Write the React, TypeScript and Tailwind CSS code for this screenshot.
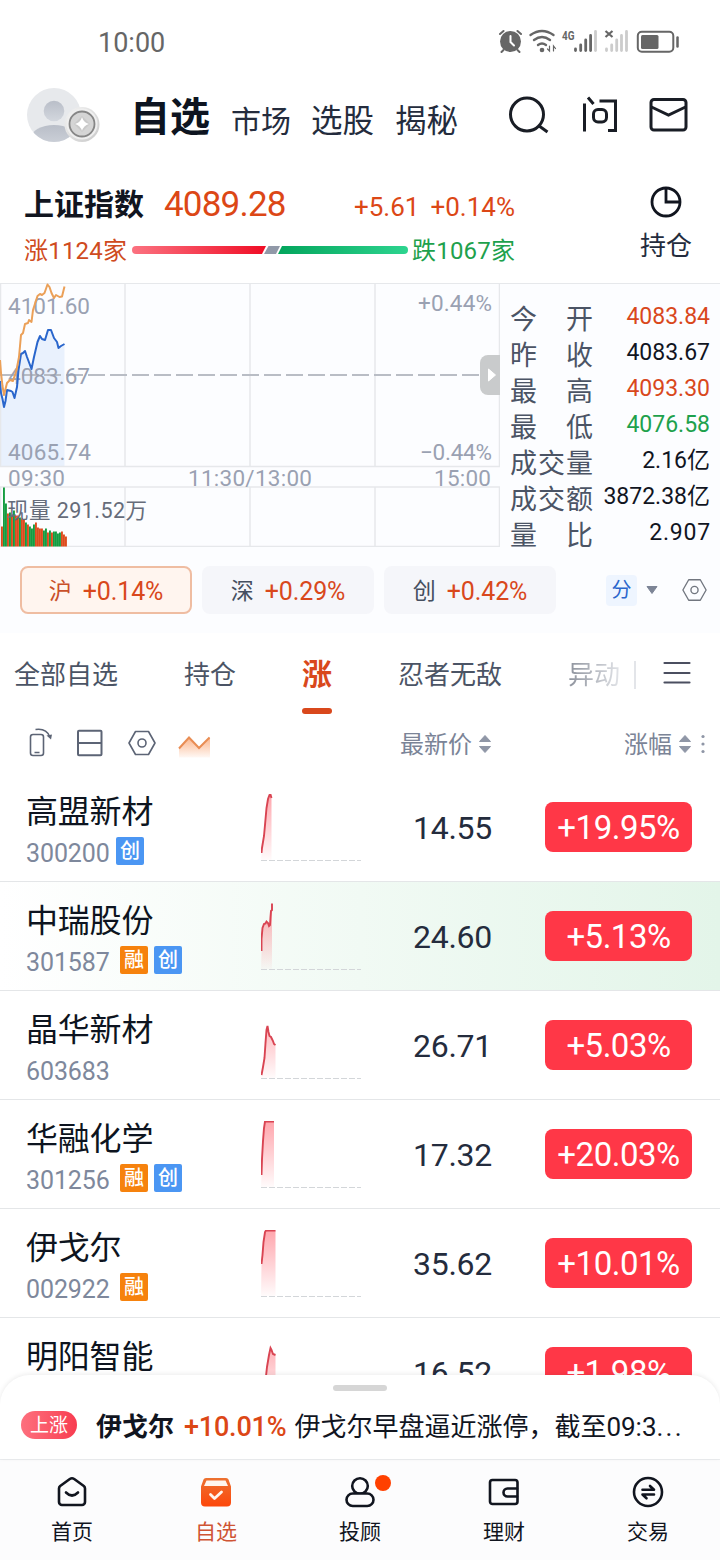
import type { ReactNode } from "react";
import clsx from "clsx";

type Tag = "融" | "创";

interface Stock {
    name: string;
    code: string;
    tags: Tag[];
    price: string;
    change: string;
    line: string;
    highlight?: boolean;
}

const STOCKS: Stock[] = [
    { name: "高盟新材", code: "300200", tags: ["创"], price: "14.55", change: "+19.95%", line: "0.5,59 1,54 3,42 4,31 5.5,14 7,5 8.5,1 9.5,0.5 10.5,4" },
    { name: "中瑞股份", code: "301587", tags: ["融", "创"], price: "24.60", change: "+5.13%", line: "0.5,48 0.5,36 1.5,25 3,21 4.5,20.5 5.5,18.5 7,20 8,23 9,22 9.5,14 10,8 11,7 11,0.5", highlight: true },
    { name: "晶华新材", code: "603683", tags: [], price: "26.71", change: "+5.03%", line: "0.5,63 2,55 3.5,46 4.5,31 5.5,18 6.5,14 7.5,20 8.5,24 10,25 12,29 13,32 14.5,33" },
    { name: "华融化学", code: "301256", tags: ["融", "创"], price: "17.32", change: "+20.03%", line: "0.5,54 1,38 2,20 3,7 4,0.5 13,0.5" },
    { name: "伊戈尔", code: "002922", tags: ["融"], price: "35.62", change: "+10.01%", line: "0.5,34 1.5,25 2.5,12 4,2 5,0.5 14.5,0.5" },
    { name: "明阳智能", code: "", tags: [], price: "16.52", change: "+1.98%", line: "0.5,70 3,56 6,28 8,16 9.5,9 10.5,11 12,15 14.5,16" },
];

const QUOTES = [
    { label: "今　开", value: "4083.84", color: "text-[#d9481c]" },
    { label: "昨　收", value: "4083.67", color: "text-[#11151f]" },
    { label: "最　高", value: "4093.30", color: "text-[#d9481c]" },
    { label: "最　低", value: "4076.58", color: "text-[#1ea14c]" },
    { label: "成交量", value: "2.16亿", color: "text-[#11151f]" },
    { label: "成交额", value: "3872.38亿", color: "text-[#11151f]" },
    { label: "量　比", value: "2.907", color: "text-[#11151f] tracking-[0.8px] -mr-px" },
];

const VOLUME = [20, 59, 43, 33, 34, 32, 36, 31, 31, 29, 28, 27, 24, 22, 20, 18, 22, 24, 19, 18, 18, 16, 18, 14, 16, 14, 15, 15, 13, 14, 15, 12, 10];
const GREEN_BARS = [1, 2, 4, 6, 9, 12, 14, 15, 16, 21, 22, 24, 26, 27, 28, 29];

const BLUE_LINE = "0,98 1,110 2.5,116 4,124 5.5,118 7,107 11,108 12.5,109 14.5,115 17,104 18.5,87 21,71 23,70 25,68 27,74 31.5,86 34,74 37.5,59 40,53 42,56 45,57 48,47 51,47 54,55 57,59 58.5,65 61,63 64.5,61";
const ORANGE_LINE = "0,77 1,90 2.5,103 4,112 7,100 10,97 13,98 16.5,87 19,74 21,52 23,50 25,41 28,40 29,37 31.5,39 33,27 37.5,13 40,11 42,12 44.5,10 47.5,1.5 49.5,4 51.5,10 54,15 56,12 59.5,14 62,13.5 64.5,3.5";

function StatusBar() {
    return (
        <div className="flex h-[84px] items-center justify-between pl-[98px] pr-10 text-[#666]">
            <span className="mt-[2px] text-[27px] leading-8">10:00</span>
            <svg className="h-7 w-[182px]" viewBox="498 28 182 28" fill="none" stroke="#666" strokeLinecap="round">
                {/* alarm */}
                <circle cx="510.500" cy="41.500" r="10.500" fill="#666" stroke="none" />
                <path d="M500 34l3.500-3M521 34l-3.500-3M503.500 50l-2 2M517.500 50l2 2" strokeWidth="2" />
                <path d="M510.500 36v6l3.500 3.500" stroke="#fff" strokeWidth="2" />
                {/* wifi */}
                <path d="M530.500 35q11.500-8 23 0M534 40q8-6 16 0M538 45q4-3 8 0" strokeWidth="2.300" />
                <circle cx="542" cy="50" r="2.300" fill="#666" stroke="none" />
                <path d="M549.500 46v5l-2-2M553.500 51v-5l2 2.500" strokeWidth="1.200" />
                {/* signal */}
                <text x="562" y="40" fontSize="13" fontWeight="700" fill="#666" stroke="none" textLength="12.500" lengthAdjust="spacingAndGlyphs">4G</text>
                <path d="M575.500 49v1.500M580.700 45v5.500M585.700 40v10.500M590.600 35.500v15" strokeWidth="2.800" />
                <path d="M595.500 31.500v19" stroke="#ccc" strokeWidth="2.800" />
                <path d="M605.500 31l7 6M612.500 31l-7 6" strokeWidth="2.200" strokeLinecap="butt" />
                <path d="M606.500 49v1.500M611.700 45v5.500M616.700 40v10.500M621.500 35.500v15M626.500 31.500v19" stroke="#ccc" strokeWidth="2.800" />
                {/* battery */}
                <rect x="637.800" y="31.800" width="35.500" height="20" rx="4" strokeWidth="2" />
                <rect x="641" y="35" width="17.500" height="14" rx="1.500" fill="#666" stroke="none" />
                <path d="M677.500 37.500v9" strokeWidth="2.500" />
            </svg>
        </div>
    );
}

function Header() {
    return (
        <header className="flex h-[66px] items-center pl-[26px] pr-[30px]">
            <svg className="h-[58px] w-[76px] shrink-0" viewBox="26 88 76 58">
                <defs>
                    <linearGradient id="avatarBody" x1="0" y1="0" x2="0" y2="1">
                        <stop offset="0" stopColor="#b9bec8" />
                        <stop offset="1" stopColor="#d3d7de" />
                    </linearGradient>
                    <linearGradient id="medal" x1="0" y1="0" x2="1" y2="1">
                        <stop offset="0" stopColor="#f4f4f4" />
                        <stop offset="1" stopColor="#c9c9c9" />
                    </linearGradient>
                    <clipPath id="avatarClip"><circle cx="54" cy="115" r="27" /></clipPath>
                </defs>
                <circle cx="54" cy="115" r="27" fill="#e7e9ec" />
                <g clipPath="url(#avatarClip)" fill="url(#avatarBody)">
                    <circle cx="54" cy="111" r="10.300" />
                    <ellipse cx="54" cy="138" rx="23" ry="13" />
                </g>
                <circle cx="82" cy="124.500" r="17.500" fill="url(#medal)" />
                <circle cx="82" cy="124" r="15.500" fill="#efefef" />
                <circle cx="82" cy="124" r="12.500" fill="#d5d5d5" stroke="#868686" strokeWidth="1.800" />
                <path d="M82 116l8 8-8 8-8-8z" fill="#c9c9c9" />
                <path d="M82 117q1.500 5.500 7 7q-5.500 1.500-7 7q-1.500-5.500-7-7q5.500-1.500 7-7z" fill="#fff" />
            </svg>
            <nav className="flex items-center pt-[2px] text-[31.500px] leading-10 text-[#242c3d]">
                <span className="ml-[28px] text-[40px] font-bold text-[#0d1420]">自选</span>
                <span className="ml-[21px] mt-2 text-[30px]">市场</span>
                <span className="ml-[20px] mt-2">选股</span>
                <span className="ml-[21px] mt-2">揭秘</span>
            </nav>
            <svg className="ml-auto h-11 w-[184px]" viewBox="506 95 184 44" fill="none" stroke="#191d25" strokeWidth="3">
                <circle cx="527" cy="114.500" r="16.500" />
                <path d="M538.500 125.500l9 6.500" />
                <path d="M584.500 103.500v28M588 97.500l5.500 6.500M599.500 101h16v29.500h-7.500" />
                <rect x="593.500" y="109.500" width="13" height="12.500" rx="4.500" />
                <rect x="651" y="99.500" width="35" height="30.500" rx="3" />
                <path d="M651.500 107l17 8 17-8" />
            </svg>
        </header>
    );
}

function IndexSummary() {
    return (
        <section className="flex h-[133px] pl-6 pt-[35px]">
            <div className="w-[500px]">
                <div className="flex h-10 items-center">
                    <span className="w-[140px] text-[30px] font-bold leading-10 text-[#11151f]">上证指数</span>
                    <span className="w-[190px] text-[35px] leading-10 tracking-[-0.8px] text-[#dc4716]">4089.28</span>
                    <span className="mt-[3px] flex gap-[11px] text-[26px] leading-8 text-[#dc4716]">
                        <span>+5.61</span>
                        <span>+0.14%</span>
                    </span>
                </div>
                <div className="mt-[9px] flex h-8 items-center text-[24px] leading-8">
                    <span className="mt-px w-[108px] whitespace-nowrap tracking-[0.2px] text-[#cf4b20]">涨1124家</span>
                    <svg className="h-2 w-[276px]" viewBox="0 0 276 8">
                        <defs>
                            <linearGradient id="riseBar">
                                <stop offset="0" stopColor="#fb7280" />
                                <stop offset="1" stopColor="#f00d25" />
                            </linearGradient>
                            <linearGradient id="fallBar">
                                <stop offset="0" stopColor="#03a55c" />
                                <stop offset="1" stopColor="#2dd48f" />
                            </linearGradient>
                        </defs>
                        <path d="M4 0H134l-4 8H4a4 4 0 010-8z" fill="url(#riseBar)" />
                        <path d="M136.500 0H148l-4 8H132z" fill="#9199a8" />
                        <path d="M150 0H272a4 4 0 010 8H146z" fill="url(#fallBar)" />
                    </svg>
                    <span className="ml-1 mt-px whitespace-nowrap tracking-[0.2px] text-[#1ea14c]">跌1067家</span>
                </div>
            </div>
            <div className="ml-[92px] flex w-[100px] flex-col items-center">
                <svg className="h-[34px] w-[34px]" viewBox="0 0 34 34" fill="none" stroke="#11151f" strokeWidth="2.800">
                    <circle cx="17" cy="17" r="14" />
                    <path d="M17 3v14h14" />
                </svg>
                <span className="mt-[11px] text-[26px] leading-8 text-[#242c3d]">持仓</span>
            </div>
        </section>
    );
}

function IndexChart() {
    return (
        <svg className="h-[264px] w-[500px] shrink-0" viewBox="0 0 500 264">
            <polygon points={`0,183 ${BLUE_LINE} 64.5,183`} fill="#e9f1fd" />
            <g fill="none" stroke="#e6e8eb" strokeWidth="1.500">
                <path d="M0.500 0V183M125 0V183M250 0V183M375 0V183M499.500 0V183M0 183.500H500" />
                <path d="M0 204H500M0.500 204V263M125 204V263M250 204V263M375 204V263M499.500 204V263M0 263.500H500" />
            </g>
            <path d="M0 92H480" stroke="#b9bdc5" strokeWidth="2" strokeDasharray="17 5" />
            <g fontSize="22.500" fill="#9aa1b2">
                <text x="8" y="31" textLength="82">4101.60</text>
                <text x="8" y="101" textLength="82">4083.67</text>
                <text x="8" y="177" textLength="83">4065.74</text>
                <text x="418" y="28" textLength="74">+0.44%</text>
                <text x="420" y="177" textLength="72">−0.44%</text>
                <text x="8" y="202.500" textLength="57">09:30</text>
                <text x="188" y="202.500" textLength="124">11:30/13:00</text>
                <text x="434" y="202.500" textLength="57">15:00</text>
            </g>
            <g fill="none" strokeWidth="2" strokeLinejoin="round">
                <polyline points={BLUE_LINE} stroke="#2a66cc" />
                <polyline points={ORANGE_LINE} stroke="#eba058" />
            </g>
            {VOLUME.map((h, i) => (
                <rect key={i} x={1 + i * 2} y={263.5 - h} width="1.900" height={h} fill={GREEN_BARS.includes(i) ? "#149c40" : "#dd4b1c"} />
            ))}
            <text x="7" y="234.500" fontSize="21.500" fill="#666c7a" textLength="140">现量 291.52万</text>
            <path d="M500 72H488a8 8 0 00-8 8V104a8 8 0 008 8H500z" fill="#c9cbcc" />
            <path d="M488.500 86l7 6-7 6z" fill="#fff" stroke="#fff" strokeLinejoin="round" />
        </svg>
    );
}

function HexIcon({ className }: { className: string }) {
    return (
        <svg className={className} viewBox="0 0 28 26" fill="none" stroke="currentColor" strokeWidth="1.500" strokeLinejoin="round">
            <path d="M7.500 1.500h13L27 13l-6.500 11.500h-13L1 13z" />
            <circle cx="14" cy="13" r="4" />
        </svg>
    );
}

function MarketChip({ name, value, active }: { name: string; value: string; active?: boolean }) {
    return (
        <div className={clsx("flex h-12 w-[172px] items-center justify-center gap-[11px] rounded-lg pt-[3px]", active ? "border-2 border-[#efbda2] bg-[#fff5ef]" : "bg-[#f5f6fa]")}>
            <span className={clsx("text-[23px] leading-8", active ? "text-[#c9502a]" : "text-[#454f60]")}>{name}</span>
            <span className="text-[25px] leading-8 tracking-[-0.1px] text-[#d9481c]">{value}</span>
        </div>
    );
}

function MarketPanel() {
    return (
        <section className="h-[350px] bg-[#fcfdff]">
            <div className="flex h-[265px] border-t border-[#e6e8eb]">
                <div className="-mt-px flex"><IndexChart /></div>
                <div className="flex flex-1 flex-col pl-[10px] pr-[10px] pt-[15px]">
                    {QUOTES.map((q) => (
                        <div key={q.label} className="flex h-9 justify-between whitespace-nowrap">
                            <span className="pt-[3px] text-[27px] leading-9 tracking-[1px] text-[#4b5465]">{q.label}</span>
                            <span className={clsx("-ml-3 text-[23px] leading-9", q.color)}>{q.value}</span>
                        </div>
                    ))}
                </div>
            </div>
            <div className="mt-[18px] flex items-center pl-5">
                <div className="flex gap-[10px]">
                    <MarketChip name="沪" value="+0.14%" active />
                    <MarketChip name="深" value="+0.29%" />
                    <MarketChip name="创" value="+0.42%" />
                </div>
                <span className="ml-[50px] flex h-[31px] w-[31px] items-center justify-center rounded bg-[#eef5ff] text-[20px] text-[#2a66cc]">分</span>
                <svg className="ml-[9px] h-2 w-3" viewBox="0 0 12 8"><path d="M1 .5h10L6 7.500z" fill="#7d8596" stroke="#7d8596" strokeLinejoin="round" /></svg>
                <HexIcon className="ml-6 h-6 w-[25px] text-[#71767f]" />
            </div>
        </section>
    );
}

function WatchTabs() {
    return (
        <nav className="flex h-[82px] items-center whitespace-nowrap pt-px text-[26px] leading-8 text-[#4b5465]">
            <span className="ml-[14px] mt-px w-[170px]">全部自选</span>
            <span className="mt-px w-[118px]">持仓</span>
            <span className="relative w-[96px] text-[30px] font-bold text-[#d9481c]">
                涨
                <i className="absolute left-0 top-[49px] h-[6px] w-[30px] rounded-full bg-[#d9481c]" />
            </span>
            <span className="mt-px w-[170px]">忍者无敌</span>
            <span className="mt-px bg-gradient-to-r from-[#8d929c] to-[#e2e4e8] bg-clip-text text-transparent">异动</span>
            <span className="ml-[14px] h-7 w-[2px] bg-[#e3e5e9]" />
            <svg className="-mt-[3px] ml-[27px] h-6 w-7" viewBox="0 0 28 24" stroke="#4b4f60" strokeWidth="2.200" strokeLinecap="round">
                <path d="M1.500 2h25M1.500 12h25M1.500 21.500h25" />
            </svg>
        </nav>
    );
}

function SortArrows() {
    return (
        <svg className="h-[22px] w-[14px]" viewBox="0 0 14 22" fill="#8f96a6" stroke="#8f96a6" strokeLinejoin="round">
            <path d="M1.500 8.500h11L7 2.500zM1.500 13.500h11L7 19.500z" />
        </svg>
    );
}

function ColumnHeader() {
    return (
        <div className="flex h-[58px] items-center pl-[29px] text-[24px] leading-8 text-[#7b8497]">
            <svg className="h-8 w-[182px]" viewBox="29 728 182 32" fill="none" stroke="#5c6475" strokeWidth="1.600">
                <defs>
                    <linearGradient id="trendFill" x1="0" y1="0" x2="0" y2="1">
                        <stop offset="0" stopColor="#fbb48a" />
                        <stop offset="1" stopColor="#fff8f4" />
                    </linearGradient>
                </defs>
                <rect x="30.500" y="734.500" width="13" height="21" rx="2.500" />
                <path d="M34.500 752.500h5M35.500 729.500q11-1.500 14 7" />
                <path d="M46.500 735.500l5.500-1-1 5z" fill="#5c6475" stroke="none" />
                <rect x="78" y="730.800" width="23.500" height="24.500" rx="1" strokeWidth="2" />
                <path d="M78 743h23.500" strokeWidth="2" />
                <path d="M135.500 731.500h13L155 743l-6.500 11.500h-13L129 743z" strokeLinejoin="round" />
                <circle cx="142" cy="743" r="4" />
                <path d="M179 748.500l10-11 10 10.500 11-11v20.500h-31z" fill="url(#trendFill)" stroke="none" />
                <path d="M179 748.500l10-11 10 10.500 10.500-10.500" stroke="#e98d54" strokeWidth="2" />
            </svg>
            <span className="ml-[189px] mt-px w-[78px]">最新价</span>
            <SortArrows />
            <span className="ml-[132px] mt-px w-[54px]">涨幅</span>
            <SortArrows />
            <svg className="ml-[9px] h-5 w-1" viewBox="0 0 4 20" fill="#8f96a6">
                <circle cx="2" cy="2.500" r="1.600" />
                <circle cx="2" cy="10" r="1.600" />
                <circle cx="2" cy="17.500" r="1.600" />
            </svg>
        </div>
    );
}

function Sparkline({ line }: { line: string }) {
    const lastX = line.split(" ").pop()!.split(",")[0];
    return (
        <svg className="mt-[21px] h-[68px] w-[100px] shrink-0" viewBox="0 0 100 68">
            <defs>
                <linearGradient id="spark" gradientUnits="userSpaceOnUse" x1="0" y1="0" x2="0" y2="66">
                    <stop offset="0" stopColor="#ff3747" stopOpacity="0.450" />
                    <stop offset="1" stopColor="#ff3747" stopOpacity="0.020" />
                </linearGradient>
            </defs>
            <polygon points={`0,66 ${line} ${lastX},66`} fill="url(#spark)" />
            <polyline points={line} fill="none" stroke="#d94452" strokeWidth="1.900" />
            <path d="M0 66.500H100" stroke="#d3d6d9" strokeDasharray="6 2" />
        </svg>
    );
}

function StockRow({ stock }: { stock: Stock }) {
    const margin = stock.tags[0] === "融";
    return (
        <div className={clsx("flex h-[109px] border-b border-[#e4e6e8] pl-[26px]", stock.highlight && "bg-gradient-to-r from-white to-[#e3f5e9]")}>
            <div className="w-[235px] pt-[19px]">
                <div className="text-[32px] leading-10 tracking-[-0.2px] text-[#0d1420]">{stock.name}</div>
                <div className={clsx("mt-[5px] flex h-7 items-center", margin && "gap-[6px]")}>
                    <span className={clsx("mt-[5px] text-[25px] leading-7 tracking-[-0.1px] text-[#7e889c]", margin ? "w-[88px]" : "w-[90px]")}>{stock.code}</span>
                    {stock.tags.map((tag) => (
                        <span key={tag} className={clsx("flex h-7 w-7 items-center justify-center rounded-[2px] text-[20px] font-medium leading-7 text-white", tag === "融" ? "bg-[#f6820d]" : "bg-[#4b96f3]")}>
                            {tag}
                        </span>
                    ))}
                </div>
            </div>
            <Sparkline line={stock.line} />
            <span className="w-[131px] pt-[35px] text-right text-[32px] leading-10 tracking-[-0.3px] text-[#242c3d]">{stock.price}</span>
            <span className="ml-[53px] mt-[29px] h-[50px] w-[147px] rounded-lg bg-[#ff3747] text-center text-[33px] leading-[52px] tracking-[-0.500px] text-white">{stock.change}</span>
        </div>
    );
}

function NewsSheet() {
    return (
        <section className="relative -mt-[30px] h-[84px] rounded-t-[30px] bg-white pt-[10px] shadow-[0_-1px_5px_rgba(0,0,0,0.08)]">
            <div className="mx-auto h-[6px] w-[54px] rounded-full bg-[#d6d6d6]" />
            <div className="mt-[18px] flex h-8 items-center whitespace-nowrap pl-[21px] text-[26px] leading-8 text-[#11151f]">
                <span className="h-7 w-14 rounded-full bg-gradient-to-r from-[#fd6f7e] to-[#f83b50] text-center text-[19px] leading-[29px] text-white">上涨</span>
                <span className="ml-[19px] mt-[3px] font-bold">伊戈尔</span>
                <span className="ml-[10px] mt-[3px] text-[27px] font-medium tracking-[-0.2px] text-[#dc4716]">+10.01%</span>
                <span className="ml-[8px] mt-[3px]">伊戈尔早盘逼近涨停，截至09:3<span className="tracking-[2.200px]">...</span></span>
            </div>
        </section>
    );
}

function NavItem({ label, active, children }: { label: string; active?: boolean; children: ReactNode }) {
    return (
        <div className={clsx("flex flex-1 flex-col items-center pt-[14px] text-[21px] leading-7", active ? "text-[#cf5434]" : "text-[#11151f]")}>
            <svg className="h-9 w-9 overflow-visible" viewBox="0 0 36 36" fill="none" stroke="#11151f" strokeWidth="2.600" strokeLinejoin="round" strokeLinecap="round">
                {children}
            </svg>
            <span className="mt-2">{label}</span>
        </div>
    );
}

function BottomNav() {
    return (
        <nav className="flex h-[101px] border-t border-[#eceef0] bg-[#fcfcfd]">
            <NavItem label="首页">
                <path d="M5 14.500Q5 13 6.200 12L15.800 5Q18 3.500 20.200 5L29.800 12Q31 13 31 14.500V28a3 3 0 01-3 3H8a3 3 0 01-3-3z" />
                <path d="M12 18.500q6 6 12 0" />
            </NavItem>
            <NavItem label="自选" active>
                <defs>
                    <linearGradient id="boxFill" x1="0" y1="0" x2="0" y2="1">
                        <stop offset="0" stopColor="#ec7130" />
                        <stop offset="1" stopColor="#fd470b" />
                    </linearGradient>
                </defs>
                <path d="M8 4h20q2 0 2.500 1.500l2.500 7V28.500q0 4-4 4H7q-4 0-4-4v-16l2.500-7Q6 4 8 4z" fill="url(#boxFill)" stroke="none" />
                <path d="M8.500 6.500h19l2.500 5.500H6z" fill="#fff6ee" stroke="none" />
                <path d="M12.500 20.500l4 4 7-6.500" stroke="#fff6ee" strokeWidth="2.800" />
            </NavItem>
            <NavItem label="投顾">
                <circle cx="18" cy="12" r="7.800" />
                <rect x="4.500" y="19.500" width="27" height="12.500" rx="6.250" fill="#fcfcfd" />
                <circle cx="41" cy="9" r="8" fill="#ff4000" stroke="none" />
            </NavItem>
            <NavItem label="理财">
                <rect x="4" y="6" width="27.500" height="24" rx="2.500" />
                <path d="M31 14.500H21.500a4 4 0 000 8H31" />
            </NavItem>
            <NavItem label="交易">
                <circle cx="18" cy="18" r="14" />
                <path d="M12.500 15.800h11.500l-4-3.800M24 20.500H12.500l4 3.800" />
            </NavItem>
        </nav>
    );
}

export default function App() {
    return (
        <div className="h-[1560px] w-[720px] overflow-hidden bg-white font-[Roboto,'Noto_Sans_CJK_SC',sans-serif]">
            <StatusBar />
            <Header />
            <IndexSummary />
            <MarketPanel />
            <WatchTabs />
            <ColumnHeader />
            <div className="h-[632px] overflow-hidden">
                {STOCKS.map((stock) => (
                    <StockRow key={stock.name} stock={stock} />
                ))}
            </div>
            <NewsSheet />
            <BottomNav />
        </div>
    );
}
